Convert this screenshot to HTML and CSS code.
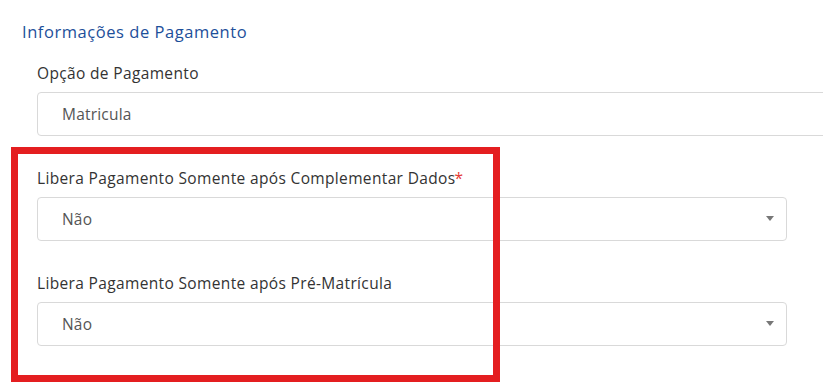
FILE: index.html
```html
<!DOCTYPE html>
<html lang="pt-BR">
<head>
    <meta charset="UTF-8">
    <meta name="viewport" content="width=device-width, initial-scale=1.0">
    <title>Informações de Pagamento</title>
    <link rel="stylesheet" href="styles.css">
</head>
<body>
    <div class="section">
        <h2 class="section-title">Informações de Pagamento</h2>

        <div class="field">
            <label class="field-label">Opção de Pagamento</label>
            <div class="input wide">Matricula</div>
        </div>

        <div class="field">
            <label class="field-label">Libera Pagamento Somente após Complementar Dados<span class="req">*</span></label>
            <div class="input select">Não<span class="caret"></span></div>
        </div>

        <div class="field">
            <label class="field-label">Libera Pagamento Somente após Pré-Matrícula</label>
            <div class="input select">Não<span class="caret"></span></div>
        </div>

        <!-- destaque vermelho -->
        <div class="highlight"></div>
    </div>
</body>
</html>
```

FILE: styles.css
```css
body {
    font-family: "Open Sans", "Noto Sans", Arial, sans-serif;
    margin: 0;
    background-color: #fff;
    overflow: hidden;
}
.section {
    position: relative;
    padding: 20px 0 0 22px;
    height: 363px;
}
.section-title {
    margin: 0 0 19px 0;
    font-size: 16.5px;
    font-weight: 400;
    color: #1d4f9a;
    line-height: 24px;
    letter-spacing: 0.55px;
}
.field {
    margin-left: 15px;
    margin-bottom: 32px;
}
.field-label {
    display: block;
    font-size: 15.5px;
    color: #333;
    line-height: 20px;
    margin-bottom: 9px;
    letter-spacing: 0.35px;
}
.req {
    color: #e53935;
    margin-left: -1px;
}
.input {
    box-sizing: border-box;
    height: 44px;
    width: 750px;
    border: 1px solid #d9d9d9;
    border-radius: 4px;
    padding: 0 0 0 24px;
    font-size: 15.5px;
    letter-spacing: 0.2px;
    color: #555;
    display: flex;
    align-items: center;
    position: relative;
}
.input.wide {
    width: 820px;
}
.caret {
    position: absolute;
    right: 12px;
    top: 18px;
    width: 0;
    height: 0;
    border-left: 4px solid transparent;
    border-right: 4px solid transparent;
    border-top: 5px solid #777;
}
.highlight {
    position: absolute;
    left: 11px;
    top: 147px;
    width: 489px;
    height: 235px;
    box-sizing: border-box;
    border: 7px solid #e41e20;
}
```
